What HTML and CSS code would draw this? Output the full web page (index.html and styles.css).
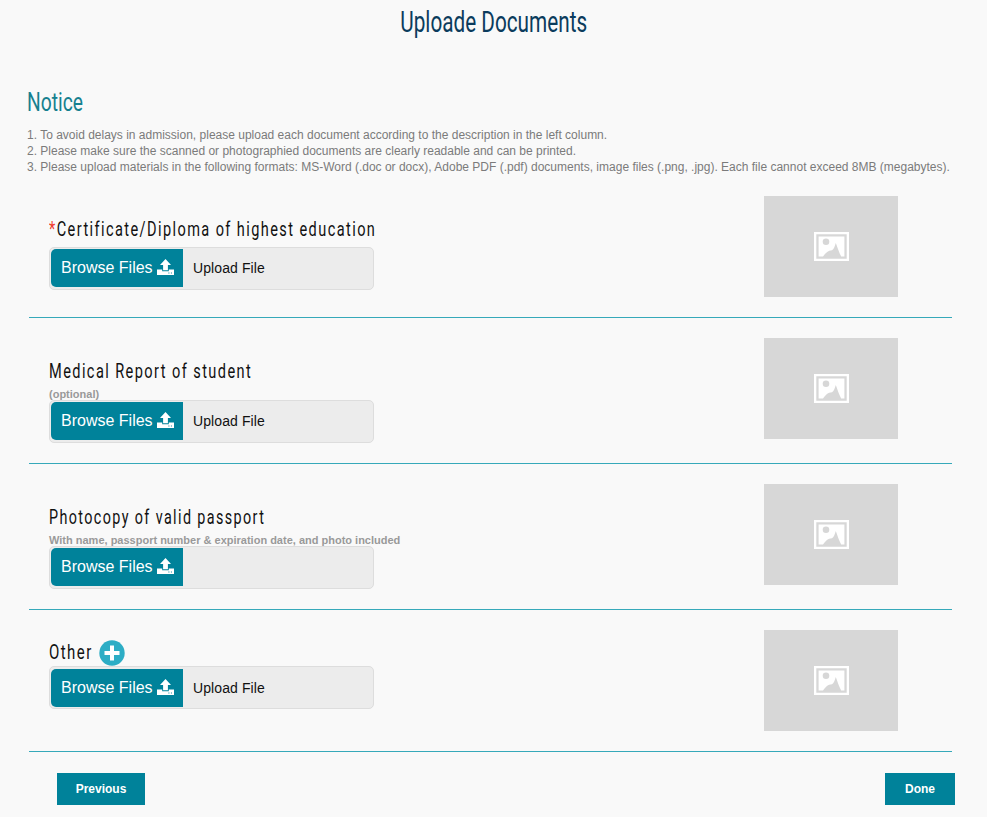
FILE: index.html
```html
<!DOCTYPE html>
<html lang="en">
<head>
<meta charset="utf-8">
<title>Uploade Documents</title>
<link rel="stylesheet" href="styles.css">
</head>
<body>
<svg width="0" height="0" class="symbols" aria-hidden="true">
  <symbol id="upload" viewBox="0 0 17 16"><path d="M8.500 0L14 6H10.900V11.200H6.100V6H3Z"/><path d="M0 10.500H5.200V12.200H11.800V10.500H17V16H0ZM11.400 13.600V14.400H12.400V13.600ZM13.900 13.600V14.400H14.900V13.600Z" fill-rule="evenodd"/></symbol>
  <symbol id="picture" viewBox="0 0 35 29"><path d="M0 0H35V29H0ZM2.300 2.300V26.700H32.700V2.300Z" fill-rule="evenodd"/><path d="M4.600 4.600H30.400V24.400H27.200C25.400 21.500 23.800 16.500 21.800 11C20.800 14 20.200 17.200 18 18.200C13.800 18.400 11.800 20.800 9 24.400H4.600Z"/><circle cx="12" cy="9.800" r="3.300" class="sun"/></symbol>
</svg>
<header class="title"><h1><span class="narrow title-text">Uploade Documents</span></h1></header>
<main>
  <section class="notice">
    <h2><span class="narrow notice-text">Notice</span></h2>
    <p>1. To avoid delays in admission, please upload each document according to the description in the left column.</p>
    <p>2. Please make sure the scanned or photographied documents are clearly readable and can be printed.</p>
    <p>3. Please upload materials in the following formats: MS-Word (.doc or docx), Adobe PDF (.pdf) documents, image files (.png, .jpg). Each file cannot exceed 8MB (megabytes).</p>
  </section>

  <section class="row first">
    <div class="field">
      <h3><span class="narrow label certificate"><span class="required">*</span>Certificate/Diploma of highest education</span></h3>
      <div class="upload"><button class="browse">Browse Files<svg><use href="#upload"/></svg></button><span class="file">Upload File</span></div>
    </div>
    <div class="thumb"><svg><use href="#picture"/></svg></div>
  </section>

  <section class="row">
    <div class="field">
      <h3><span class="narrow label medical">Medical Report of student</span></h3>
      <small>(optional)</small>
      <div class="upload"><button class="browse">Browse Files<svg><use href="#upload"/></svg></button><span class="file">Upload File</span></div>
    </div>
    <div class="thumb"><svg><use href="#picture"/></svg></div>
  </section>

  <section class="row">
    <div class="field">
      <h3><span class="narrow label passport">Photocopy of valid passport</span></h3>
      <small>With name, passport number &amp; expiration date, and photo included</small>
      <div class="upload"><button class="browse">Browse Files<svg><use href="#upload"/></svg></button><span class="file"></span></div>
    </div>
    <div class="thumb"><svg><use href="#picture"/></svg></div>
  </section>

  <section class="row other-row">
    <div class="field">
      <h3><span class="other-box"><span class="narrow label other">Other</span></span><svg class="add" viewBox="0 0 26 26"><circle cx="13" cy="13" r="12.700"/><path d="M13 5.500V20.500M5.500 13H20.500"/></svg></h3>
      <div class="upload"><button class="browse">Browse Files<svg><use href="#upload"/></svg></button><span class="file">Upload File</span></div>
    </div>
    <div class="thumb"><svg><use href="#picture"/></svg></div>
  </section>
  <nav><button>Previous</button><button>Done</button></nav>
</main>
</body>
</html>
```
FILE: styles.css
```css
* { box-sizing: border-box; }
body { margin: 0; height: 817px; overflow: hidden; background: #f9f9f9; font-family: "Liberation Sans", Arial, sans-serif; color: #111; }
h1, h2, h3, p { margin: 0; font-weight: 400; }
.symbols { display: block; }
.narrow { display: inline-block; white-space: nowrap; transform-origin: left center; font-family: Roboto, sans-serif; }
.title { height: 86px; display: flex; justify-content: center; }
.title h1 { height: 44px; line-height: 44px; font-size: 29px; color: #0b3c5d; }
.title-text { transform-origin: center; transform: scaleX(.715); }
.notice { height: 90px; padding-left: 27px; font-size: 12px; line-height: 16px; color: #7b7b7b; }
.notice h2 { height: 41px; line-height: 33px; font-size: 26px; color: #16808f; }
.notice-text { transform: scaleX(.74); }
.notice p { white-space: nowrap; }
.row { display: flex; justify-content: space-between; height: 146px; margin: 0 35px 0 29px; padding: 20px 54px 0 20px; border-bottom: 1px solid #36a9ba; }
.row.first { height: 142px; }
.row.other-row { height: 142px; }
.field { width: 360px; padding-top: 17px; }
h3 { height: 34px; line-height: 31px; font-size: 20.500px; }
.label { letter-spacing: 2px; }
.certificate { transform: scaleX(.709); }
.medical { transform: scaleX(.71); }
.passport { transform: scaleX(.699); }
.other { transform: scaleX(.73); }
.required { color: #f0392b; }
small { display: block; height: 11px; line-height: 11px; font-size: 11px; font-weight: 700; color: #999; white-space: nowrap; }
.upload { display: flex; width: 325px; height: 43px; padding: 1px; border: 1px solid #ddd; border-radius: 5px; background: #ececec; }
button { border: 0; background: #00829a; color: #fff; font-family: inherit; }
.browse { display: flex; align-items: center; width: 132px; height: 38px; padding: 0 0 1px 10px; border-radius: 5px 0 0 5px; font-size: 16px; white-space: nowrap; }
.browse svg { width: 17px; height: 16px; margin: 0 0 1px 4px; fill: #fff; }
.file { padding-left: 10px; font-size: 14px; letter-spacing: .1px; line-height: 38px; }
.thumb { display: flex; align-items: center; justify-content: center; width: 134px; height: 101px; background: #d7d7d7; }
.thumb svg { width: 35px; height: 29px; fill: #fff; }
.sun { fill: #d7d7d7; }
.other-row .field { padding-top: 6px; }
.other-row h3 { display: flex; height: 30px; }
.other-row .upload { padding-top: 2px; }
.other-box { width: 50px; }
.add { width: 26px; height: 26px; margin-top: 4px; fill: #2dadc5; stroke: #fff; stroke-width: 4; }
.add circle { stroke: none; }
nav { display: flex; justify-content: space-between; padding: 21px 32px 0 57px; }
nav button { width: 88px; height: 32px; padding: 0; font-size: 12px; font-weight: 700; }
nav button + button { width: 70px; }
```
